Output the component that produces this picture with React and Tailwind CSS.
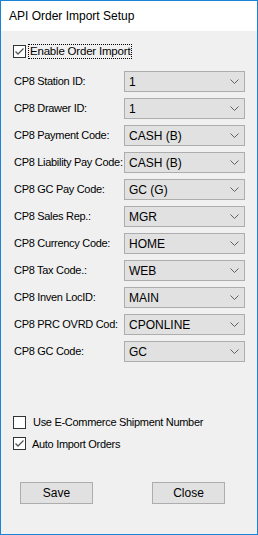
import React from "react";

const rows = [
  ["CP8 Station ID:", "1"],
  ["CP8 Drawer ID:", "1"],
  ["CP8 Payment Code:", "CASH (B)"],
  ["CP8 Liability Pay Code:", "CASH (B)"],
  ["CP8 GC Pay Code:", "GC (G)"],
  ["CP8 Sales Rep.:", "MGR"],
  ["CP8 Currency Code:", "HOME"],
  ["CP8 Tax Code.:", "WEB"],
  ["CP8 Inven LocID:", "MAIN"],
  ["CP8 PRC OVRD Cod:", "CPONLINE"],
  ["CP8 GC Code:", "GC"],
];

const Check = ({ checked }) => (
  <div className="w-[13px] h-[13px] border border-[#333333] bg-white flex items-center justify-center shrink-0">
    {checked && (
      <svg width="11" height="11" viewBox="0 0 11 11">
        <path d="M1.5 5.5 L4 8 L9.5 2.5" fill="none" stroke="#555555" strokeWidth="1.3" />
      </svg>
    )}
  </div>
);

const Combo = ({ value }) => (
  <div className="w-[121px] h-[21px] bg-[#e1e1e1] border border-[#adadad] flex items-center justify-between pl-[4px] pr-[5px] text-[12px] tracking-normal">
    <span>{value}</span>
    <svg width="9" height="5" viewBox="0 0 9 5">
      <path d="M0.5 0.5 L4.5 4.5 L8.5 0.5" fill="none" stroke="#606060" strokeWidth="1" />
    </svg>
  </div>
);

export default function App() {
  return (
    <div
      className="w-[258px] h-[535px] border border-[#1883d7] bg-[#f0f0f0] flex flex-col text-[11px] tracking-[-0.3px] text-black"
      style={{ fontFamily: '"Liberation Sans", Arial, sans-serif' }}
    >
      {/* Title bar */}
      <div className="h-[30px] bg-white flex items-center pl-[8px] text-[12px] tracking-normal">
        API Order Import Setup
      </div>

      <div className="flex flex-col pl-[12px]">
        {/* Enable */}
        <div className="flex items-center gap-[2px] mt-[13px]">
          <Check checked />
          <span className="border border-dotted border-black px-[1px] leading-[13px] text-[11.5px] tracking-[-0.2px]">
            Enable Order Import
          </span>
        </div>

        {/* Fields */}
        <div className="flex flex-col gap-[6px] mt-[12px]">
          {rows.map(([label, value]) => (
            <div key={label} className="flex items-center">
              <span className="w-[111px] pl-[1px] whitespace-nowrap">{label}</span>
              <Combo value={value} />
            </div>
          ))}
        </div>

        {/* Options */}
        <div className="flex items-center gap-[7px] mt-[52px]">
          <Check />
          <span>Use E-Commerce Shipment Number</span>
        </div>
        <div className="flex items-center gap-[6px] mt-[5px]">
          <Check checked />
          <span>Auto Import Orders</span>
        </div>

        {/* Buttons */}
        <div className="flex mt-[30px] pl-[7px] gap-[59px]">
          <button className="w-[73px] h-[22px] bg-[#e1e1e1] border border-[#adadad] text-[12px] tracking-normal">Save</button>
          <button className="w-[73px] h-[22px] bg-[#e1e1e1] border border-[#adadad] text-[12px] tracking-normal">Close</button>
        </div>
      </div>
    </div>
  );
}
